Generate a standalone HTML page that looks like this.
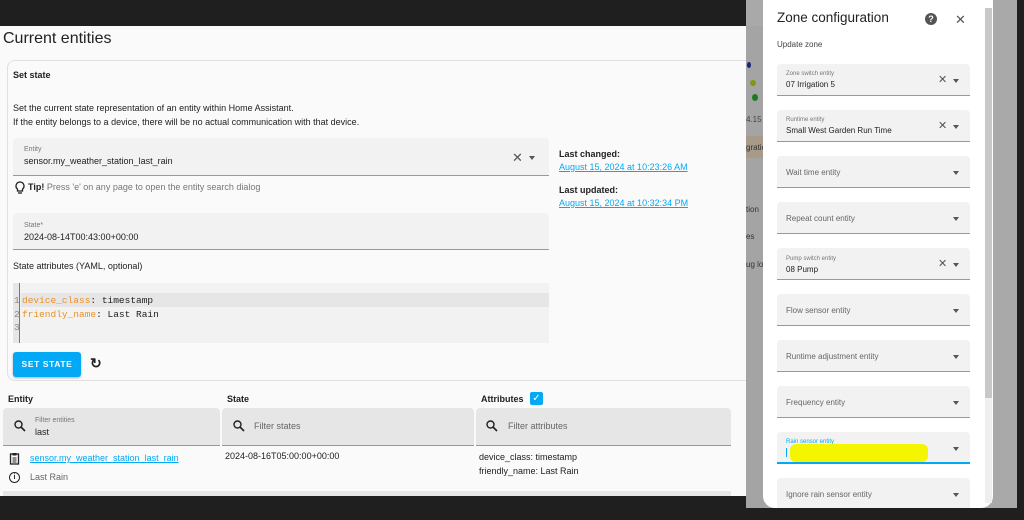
<!DOCTYPE html>
<html><head><meta charset="utf-8"><style>
*{margin:0;padding:0;box-sizing:border-box}
body{width:1024px;height:520px;overflow:hidden;background:#1f1f1f;font-family:"Liberation Sans",sans-serif;position:relative;color:#212121}
.a{position:absolute}
.f{position:absolute;background:#f2f2f2;border-bottom:1px solid #999;border-radius:4px 4px 0 0}
.lbl{position:absolute;font-size:7px;color:#777}
.val{position:absolute;font-size:9px;color:#222}
.ph{position:absolute;font-size:9px;color:#666}
.dd{position:absolute;width:0;height:0;border-left:3.5px solid transparent;border-right:3.5px solid transparent;border-top:4px solid #555}
.x{position:absolute;font-size:13px;color:#555;line-height:1}
a{color:#03a9f4;text-decoration:underline}
</style></head><body>
<div class="a" style="left:0;top:26px;width:746px;height:470px;background:#fafafa"></div>
<div class="a" style="left:3px;top:30px;font-size:16px;color:#222">Current entities</div>
<div class="a" style="left:7px;top:60px;width:745px;height:321px;border:1px solid #e0e0e0;border-radius:8px;background:#fafafa"></div>
<div class="a" style="left:13px;top:70px;font-size:9px;font-weight:bold">Set state</div>
<div class="a" style="left:13px;top:102px;font-size:9px;line-height:13.5px">Set the current state representation of an entity within Home Assistant.<br>If the entity belongs to a device, there will be no actual communication with that device.</div>
<div class="f" style="left:13px;top:138px;width:536px;height:38px"></div>
<div class="lbl" style="left:24px;top:146px">Entity</div>
<div class="val" style="left:24px;top:156px">sensor.my_weather_station_last_rain</div>
<div class="x" style="left:512px;top:151px">✕</div>
<div class="dd" style="left:529px;top:156px"></div>
<svg class="a" style="left:15px;top:181px" width="10" height="14" viewBox="0 0 10 14"><path d="M5 1a4 4 0 0 0-2.5 7.1V10h5V8.1A4 4 0 0 0 5 1z" fill="none" stroke="#222" stroke-width="1.3"/><path d="M3 12h4" stroke="#222" stroke-width="1.3"/></svg>
<div class="a" style="left:28px;top:182px;font-size:9px;color:#777"><b style="color:#222">Tip!</b> Press 'e' on any page to open the entity search dialog</div>
<div class="f" style="left:13px;top:213px;width:536px;height:37px"></div>
<div class="lbl" style="left:24px;top:222px">State*</div>
<div class="val" style="left:24px;top:232px">2024-08-14T00:43:00+00:00</div>
<div class="a" style="left:13px;top:261px;font-size:9px">State attributes (YAML, optional)</div>
<div class="a" style="left:13px;top:283px;width:536px;height:60px;background:#f2f2f2"></div>
<div class="a" style="left:13px;top:283px;width:7px;height:60px;background:#e6e6e6;border-right:1px solid #777"></div>
<div class="a" style="left:21px;top:293px;width:528px;height:14px;background:#e6e6e6"></div>
<div class="a" style="left:14px;top:294px;font-family:'Liberation Mono',monospace;font-size:9.5px;line-height:13.5px;color:#888">1<br>2<br>3</div>
<div class="a" style="left:22px;top:294px;font-family:'Liberation Mono',monospace;font-size:9.5px;line-height:13.5px;color:#222"><span style="color:#e8912d">device_class</span>: timestamp<br><span style="color:#e8912d">friendly_name</span>: Last Rain</div>
<div class="a" style="left:13px;top:352px;width:68px;height:25px;background:#03a9f4;border-radius:3px;box-shadow:0 1px 2px rgba(0,0,0,.3);color:#fff;font-size:8.5px;font-weight:bold;letter-spacing:.6px;text-align:center;line-height:25px">SET STATE</div>
<div class="a" style="left:90px;top:355px;font-size:14px;font-weight:bold;color:#222">↻</div>
<div class="a" style="left:559px;top:149px;font-size:9px;font-weight:bold">Last changed:</div>
<div class="a" style="left:559px;top:162px;font-size:9px"><a>August 15, 2024 at 10:23:26 AM</a></div>
<div class="a" style="left:559px;top:185px;font-size:9px;font-weight:bold">Last updated:</div>
<div class="a" style="left:559px;top:198px;font-size:9px"><a>August 15, 2024 at 10:32:34 PM</a></div>
<div class="a" style="left:8px;top:394px;font-size:9px;font-weight:bold">Entity</div>
<div class="a" style="left:227px;top:394px;font-size:9px;font-weight:bold">State</div>
<div class="a" style="left:481px;top:394px;font-size:9px;font-weight:bold">Attributes</div>
<div class="a" style="left:530px;top:392px;width:13px;height:13px;background:#03a9f4;border-radius:2px;color:#fff;font-size:10px;text-align:center;line-height:13px">✓</div>
<div class="f" style="left:3px;top:408px;width:217px;height:38px;background:#e6e6e6"></div>
<div class="f" style="left:222px;top:408px;width:252px;height:38px;background:#e6e6e6"></div>
<div class="f" style="left:476px;top:408px;width:255px;height:38px;background:#e6e6e6"></div>
<svg class="a" style="left:14px;top:420px" width="12" height="12" viewBox="0 0 12 12"><circle cx="4.5" cy="4.5" r="3.5" fill="none" stroke="#222" stroke-width="1.4"/><path d="M7 7l4 4" stroke="#222" stroke-width="1.6"/></svg>
<svg class="a" style="left:233px;top:420px" width="12" height="12" viewBox="0 0 12 12"><circle cx="4.5" cy="4.5" r="3.5" fill="none" stroke="#222" stroke-width="1.4"/><path d="M7 7l4 4" stroke="#222" stroke-width="1.6"/></svg>
<svg class="a" style="left:486px;top:420px" width="12" height="12" viewBox="0 0 12 12"><circle cx="4.5" cy="4.5" r="3.5" fill="none" stroke="#222" stroke-width="1.4"/><path d="M7 7l4 4" stroke="#222" stroke-width="1.6"/></svg>
<div class="lbl" style="left:35px;top:417px">Filter entities</div>
<div class="val" style="left:35px;top:427px">last</div>
<div class="ph" style="left:254px;top:421px">Filter states</div>
<div class="ph" style="left:508px;top:421px">Filter attributes</div>
<svg class="a" style="left:9px;top:452px" width="11" height="13" viewBox="0 0 11 13"><rect x="1.5" y="2" width="8" height="10" fill="none" stroke="#222" stroke-width="1.3"/><rect x="3.5" y="1" width="4" height="2.5" fill="#222"/><path d="M3.5 6h4M3.5 8h4M3.5 10h4" stroke="#222"/></svg>
<div class="a" style="left:30px;top:453px;font-size:9px"><a>sensor.my_weather_station_last_rain</a></div>
<div class="a" style="left:9px;top:472px;width:11px;height:11px;border:1.3px solid #222;border-radius:50%;font-size:7px;text-align:center;line-height:9px;font-weight:bold">i</div>
<div class="a" style="left:30px;top:472px;font-size:9px;color:#666">Last Rain</div>
<div class="a" style="left:225px;top:451px;font-size:9px">2024-08-16T05:00:00+00:00</div>
<div class="a" style="left:479px;top:451px;font-size:9px;line-height:13.5px">device_class: timestamp<br>friendly_name: Last Rain</div>
<div class="a" style="left:3px;top:491px;width:728px;height:5px;background:#e6e6e6"></div>
<div class="a" style="left:746px;top:0;width:271px;height:508px;background:#a9a9a9"></div>
<div class="a" style="left:746px;top:26px;width:20px;height:482px;background:#a4a4a4"></div>
<div class="a" style="left:747px;top:62px;width:4px;height:6px;background:#1a237e;border-radius:50%"></div>
<div class="a" style="left:750px;top:80px;width:6px;height:6px;background:#7a9a10;border-radius:50%"></div>
<div class="a" style="left:752px;top:94px;width:6px;height:7px;background:#1b7a20;border-radius:50%"></div>
<div class="a" style="left:746px;top:115px;font-size:8px;color:#444">4.15</div>
<div class="a" style="left:746px;top:136px;width:18px;height:22px;background:#a89a88"></div>
<div class="a" style="left:746px;top:143px;font-size:8px;color:#333">gratio</div>
<div class="a" style="left:746px;top:205px;font-size:8px;color:#333">tion</div>
<div class="a" style="left:746px;top:232px;font-size:8px;color:#333">es</div>
<div class="a" style="left:746px;top:260px;font-size:8px;color:#333">ug lo</div>
<div class="a" style="left:746px;top:508px;width:278px;height:12px;background:#1f1f1f"></div>
<div class="a" style="left:763px;top:-10px;width:230px;height:518px;background:#fff;border-radius:12px"></div>
<div class="a" style="left:985px;top:8px;width:7px;height:390px;background:#c8c8c8"></div>
<div class="a" style="left:985px;top:398px;width:7px;height:105px;background:#efefef"></div>
<div class="a" style="left:777px;top:10px;font-size:13.5px;color:#222">Zone configuration</div>
<div class="a" style="left:925px;top:13px;width:12px;height:12px;border-radius:50%;background:#555;color:#fff;font-size:9px;font-weight:bold;text-align:center;line-height:12px">?</div>
<div class="x" style="left:955px;top:13px;font-size:13px">✕</div>
<div class="a" style="left:777px;top:40px;font-size:8px;color:#444">Update zone</div>

<div class="f" style="left:777px;top:64px;width:193px;height:32px"></div>
<div class="lbl" style="left:786px;top:71px;font-size:6px">Zone switch entity</div><div class="val" style="left:786px;top:80px;font-size:8px">07 Irrigation 5</div><div class="x" style="left:938px;top:75px;font-size:11px">✕</div><div class="dd" style="left:953px;top:79px"></div>

<div class="f" style="left:777px;top:110px;width:193px;height:32px"></div>
<div class="lbl" style="left:786px;top:117px;font-size:6px">Runtime entity</div><div class="val" style="left:786px;top:126px;font-size:8px">Small West Garden Run Time</div><div class="x" style="left:938px;top:121px;font-size:11px">✕</div><div class="dd" style="left:953px;top:125px"></div>

<div class="f" style="left:777px;top:156px;width:193px;height:32px"></div>
<div class="ph" style="left:786px;top:168px;font-size:8px">Wait time entity</div><div class="dd" style="left:953px;top:171px"></div>

<div class="f" style="left:777px;top:202px;width:193px;height:32px"></div>
<div class="ph" style="left:786px;top:214px;font-size:8px">Repeat count entity</div><div class="dd" style="left:953px;top:217px"></div>

<div class="f" style="left:777px;top:248px;width:193px;height:32px"></div>
<div class="lbl" style="left:786px;top:256px;font-size:6px">Pump switch entity</div><div class="val" style="left:786px;top:265px;font-size:8px">08 Pump</div><div class="x" style="left:938px;top:259px;font-size:11px">✕</div><div class="dd" style="left:953px;top:263px"></div>

<div class="f" style="left:777px;top:294px;width:193px;height:32px"></div>
<div class="ph" style="left:786px;top:306px;font-size:8px">Flow sensor entity</div><div class="dd" style="left:953px;top:309px"></div>

<div class="f" style="left:777px;top:340px;width:193px;height:32px"></div>
<div class="ph" style="left:786px;top:352px;font-size:8px">Runtime adjustment entity</div><div class="dd" style="left:953px;top:355px"></div>

<div class="f" style="left:777px;top:386px;width:193px;height:32px"></div>
<div class="ph" style="left:786px;top:398px;font-size:8px">Frequency entity</div><div class="dd" style="left:953px;top:401px"></div>

<div class="f" style="left:777px;top:432px;width:193px;height:32px;border-bottom:2px solid #03a9f4"></div>
<div class="lbl" style="left:786px;top:439px;font-size:6px;color:#03a9f4">Rain sensor entity</div>
<div class="a" style="left:790px;top:444px;width:138px;height:18px;background:#f5f500;border-radius:6px"></div>
<div class="a" style="left:786px;top:448px;width:1px;height:9px;background:#03a9f4"></div>
<div class="dd" style="left:953px;top:447px"></div>

<div class="f" style="left:777px;top:478px;width:193px;height:30px;border-bottom:none"></div>
<div class="ph" style="left:786px;top:490px;font-size:8px">Ignore rain sensor entity</div><div class="dd" style="left:953px;top:493px"></div>
</body></html>
